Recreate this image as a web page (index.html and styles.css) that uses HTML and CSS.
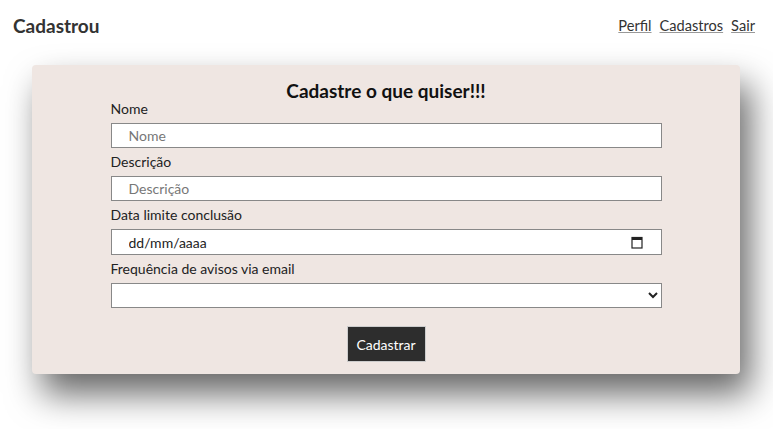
FILE: index.html
```html
<!DOCTYPE html>
<html lang="pt-BR">
<head>
<meta charset="utf-8">
<title>Cadastrou</title>
<link rel="stylesheet" href="styles.css">
</head>
<body>
<header class="topbar">
  <div class="brand">Cadastrou</div>
  <nav class="nav">
    <a href="#">Perfil</a>
    <a href="#">Cadastros</a>
    <a href="#">Sair</a>
  </nav>
</header>
<main class="card">
  <h1 class="title">Cadastre o que quiser!!!</h1>
  <form class="form">
    <label class="label" for="nome">Nome</label>
    <input class="field" id="nome" type="text" placeholder="Nome">
    <label class="label" for="desc">Descrição</label>
    <input class="field" id="desc" type="text" placeholder="Descrição">
    <label class="label" for="data">Data limite conclusão</label>
    <div class="field datebox">
      <input class="dateinput" id="data" type="text" placeholder="dd/mm/aaaa">
      <svg class="calicon" width="12" height="13" viewBox="0 0 12 13" aria-hidden="true">
        <rect x="1" y="1.5" width="10" height="10.5" fill="none" stroke="#222" stroke-width="1.2"/>
        <rect x="1" y="1.5" width="10" height="2.5" fill="#222"/>
      </svg>
    </div>
    <label class="label" for="freq">Frequência de avisos via email</label>
    <select class="field select" id="freq"><option></option></select>
    <div class="actions"><button class="btn" type="button">Cadastrar</button></div>
  </form>
</main>
</body>
</html>
```
FILE: styles.css
```css
* { box-sizing: border-box; }
html, body { margin: 0; padding: 0; background: #fff; }
body { font-family: Lato, "Noto Sans", sans-serif; color: #222; min-height: 429px; }
.topbar {
  display: flex;
  justify-content: space-between;
  align-items: center;
  height: 50px;
  padding: 0 18px 0 13px;
}
.brand { font-weight: 700; font-size: 19px; color: #333; }
.nav { display: flex; gap: 8px; font-size: 14.6px; }
.nav a { color: #333; text-decoration: underline; text-decoration-color: #999; }
.card {
  margin: 15px 33px 0 32px;
  background: #efe6e2;
  border-radius: 4px;
  padding: 14px 0 12px;
  box-shadow: 10px 20px 35px rgba(0,0,0,0.6);
}
.title {
  margin: 0;
  text-align: center;
  font-size: 19px;
  line-height: 24px;
  font-weight: 700;
  color: #111;
}
.form {
  width: 551px;
  margin: -3px auto 0;
  display: flex;
  flex-direction: column;
}
.label { font-size: 14px; line-height: 17px; margin: 0 0 6px; color: #222; }
.field {
  height: 25px;
  border: 1px solid #888;
  background: #fff;
  font-family: Lato, "Noto Sans", sans-serif;
  font-size: 14px;
  padding: 0 0 0 17px;
  margin: 0 0 5px;
  color: #222;
}
.field::placeholder { color: #777; }
.datebox {
  height: 26px;
  display: flex;
  align-items: center;
  padding-right: 18px;
}
.dateinput {
  flex: 1;
  border: 0;
  outline: 0;
  background: transparent;
  padding: 0;
  font-family: Lato, "Noto Sans", sans-serif;
  font-size: 14px;
  color: #222;
}
.dateinput::placeholder { color: #222; }
.calicon { display: block; }
.select { height: 25px; padding-left: 0; }
.actions { display: flex; justify-content: center; margin-top: 13px; }
.btn {
  width: 79px;
  height: 36px;
  background: #2d2d2d;
  color: #fff;
  border: 1px solid #ccc;
  font-family: Lato, "Noto Sans", sans-serif;
  font-size: 14px;
}
```
